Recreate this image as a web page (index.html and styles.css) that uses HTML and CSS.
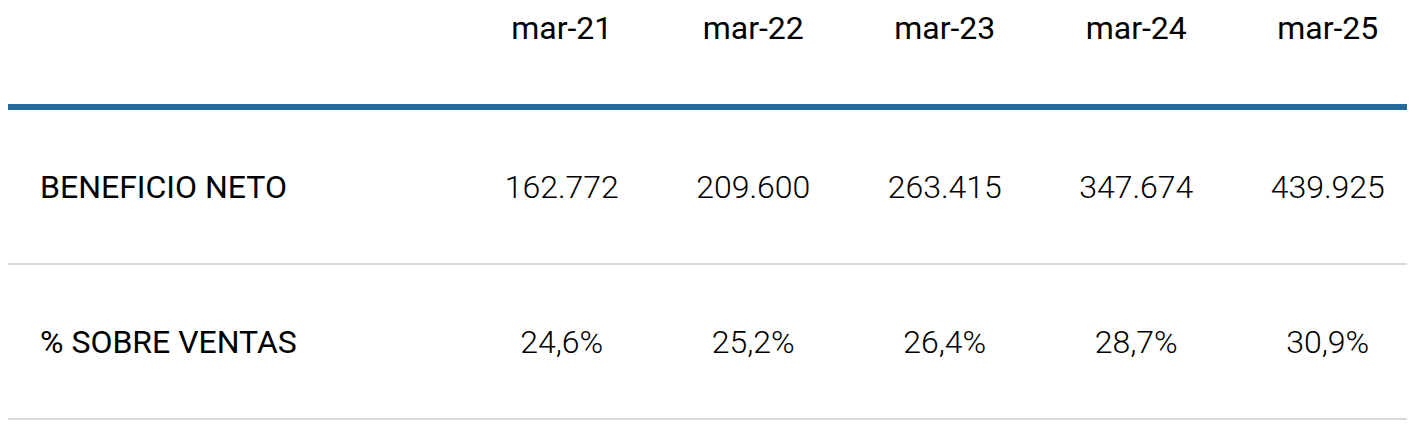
FILE: index.html
```html
<!DOCTYPE html>
<html lang="es">
<head>
<meta charset="utf-8">
<title>Beneficio neto</title>
<link rel="stylesheet" href="styles.css">
</head>
<body>
<div class="table">
  <div class="row head">
    <div class="cell label"></div>
    <div class="cell">mar-21</div>
    <div class="cell">mar-22</div>
    <div class="cell">mar-23</div>
    <div class="cell">mar-24</div>
    <div class="cell">mar-25</div>
  </div>
  <div class="row body">
    <div class="cell label">BENEFICIO NETO</div>
    <div class="cell num">162.772</div>
    <div class="cell num">209.600</div>
    <div class="cell num">263.415</div>
    <div class="cell num">347.674</div>
    <div class="cell num">439.925</div>
  </div>
  <div class="row body">
    <div class="cell label">% SOBRE VENTAS</div>
    <div class="cell num">24,6%</div>
    <div class="cell num">25,2%</div>
    <div class="cell num">26,4%</div>
    <div class="cell num">28,7%</div>
    <div class="cell num">30,9%</div>
  </div>
</div>
</body>
</html>
```

FILE: styles.css
```css
html, body {
  margin: 0;
  padding: 0;
  background: #fff;
}
body {
  padding: 8px 4px 0 8px;
  font-family: Roboto, "Liberation Sans", sans-serif;
  color: #000;
}
.table {
  display: flex;
  flex-direction: column;
}
.row {
  display: grid;
  grid-template-columns: 1fr repeat(5, 191.5px);
}
.cell {
  padding-left: 33px;
  text-align: center;
  font-size: 32px;
}
.cell.label {
  padding-left: 32px;
  text-align: left;
}
.head {
  height: 96px;
  align-items: start;
  border-bottom: 6px solid #266a9b;
}
.head .cell {
  line-height: 40px;
  font-weight: 400;
}
.body {
  height: 153px;
  align-items: center;
  border-bottom: 2px solid #d9d9d9;
}
.body .label {
  font-weight: 400;
}
.num {
  font-weight: 300;
}
```
